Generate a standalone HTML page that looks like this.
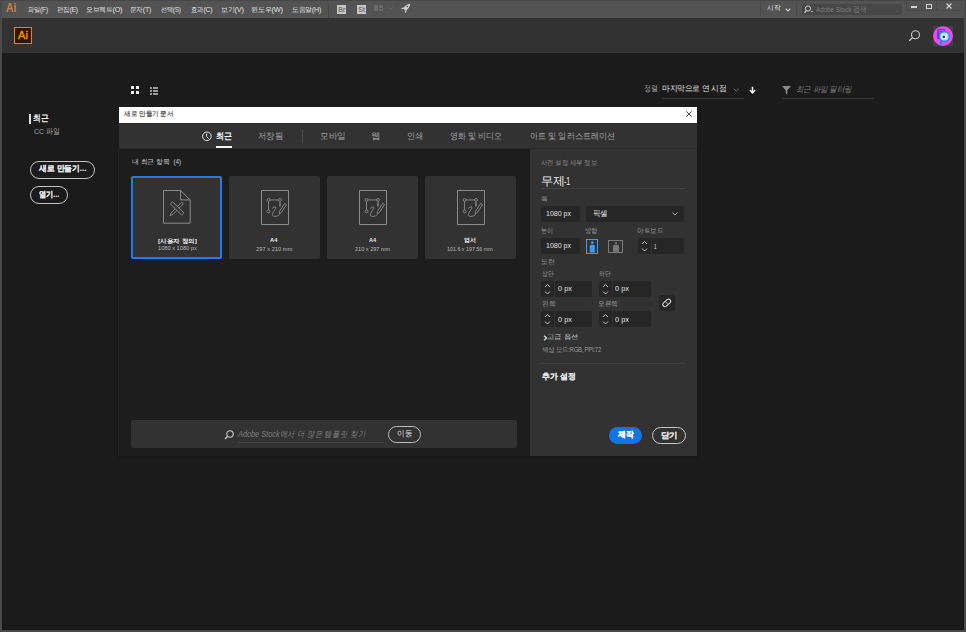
<!DOCTYPE html>
<html><head><meta charset="utf-8">
<style>
*{margin:0;padding:0;box-sizing:border-box}
html,body{width:966px;height:632px;overflow:hidden;background:#1b1b1b;font-family:"Liberation Sans",sans-serif;color:#ddd}
div,span{position:absolute;white-space:nowrap;transform-origin:0 0}
svg{position:absolute;overflow:visible}
#frame{left:0;top:0;width:966px;height:632px;border:2px solid #4a4a4a;border-top:0}
#menubar{left:0;top:0;width:966px;height:18px;background:#535353}
#header{left:0;top:18px;width:966px;height:35px;background:#323232}
.mi{top:3px;font-size:7.4px;color:#e4e4e4;line-height:12px;letter-spacing:-0.2px}
.tab{top:128px;font-size:8.7px;line-height:14px;color:#a0a0a0}
.card{top:176px;width:91px;height:83px;background:#323232;border-radius:2px}
.ct{font-size:6px;line-height:8px;color:#ececec;font-weight:bold}
.cs{font-size:5.5px;line-height:8px;color:#bababa}
.lbl{font-size:7px;line-height:9px;color:#9a9a9a}
.inp{background:#262626;border-radius:2px}
.val{font-size:8px;line-height:10px;color:#e0e0e0}
</style></head><body>
<div id="menubar">
  <div style="left:0;top:0;width:966px;height:1px;background:#474747"></div>
  <div id="t1" style="font-weight:bold;left:6.42px;top:1.20px;font-size:12px;line-height:14px;color:#c8834f;transform:scaleX(0.865)">Ai</div>
  <div id="t2" class="mi" style="left:27.60px;top:3.50px;transform:scaleX(0.887)">파일(F)</div>
  <div id="t3" class="mi" style="left:57.00px;top:3.50px;transform:scaleX(0.913)">편집(E)</div>
  <div id="t4" class="mi" style="left:86.03px;top:3.50px;transform:scaleX(0.973)">오브젝트(O)</div>
  <div id="t5" class="mi" style="left:130.24px;top:3.50px;transform:scaleX(0.946)">문자(T)</div>
  <div id="t6" class="mi" style="left:161.21px;top:3.50px;transform:scaleX(0.862)">선택(S)</div>
  <div id="t7" class="mi" style="left:191.00px;top:3.50px;transform:scaleX(0.917)">효과(C)</div>
  <div id="t8" class="mi" style="left:221.00px;top:3.50px">보기(V)</div>
  <div id="t9" class="mi" style="left:251.20px;top:3.50px">윈도우(W)</div>
  <div id="t10" class="mi" style="left:291.82px;top:3.50px;transform:scaleX(0.967)">도움말(H)</div>
  <div style="left:328px;top:4px;width:1px;height:14px;background:#474747"></div>
  <div style="left:337px;top:5px;width:9px;height:9px;background:#c6c6c6"></div><div id="t11" style="left:338.3px;top:5.5px;font-size:7px;line-height:8px;color:#505050">Br</div>
  <div style="left:357px;top:5px;width:9px;height:9px;background:#c6c6c6"></div><div id="t12" style="left:358.3px;top:5.5px;font-size:7px;line-height:8px;color:#505050">St</div>
  <div style="left:374px;top:5px;width:3.5px;height:6px;background:#6a6a6a"></div>
  <div style="left:378.7px;top:5px;width:4.3px;height:3px;background:#6a6a6a"></div>
  <div style="left:378.7px;top:8.8px;width:4.3px;height:2.3px;background:#6a6a6a"></div>
  <svg style="left:387.5px;top:7px" width="5" height="3"><path d="M0.4 0.4L2.5 2.4L4.6 0.4" stroke="#707070" fill="none" stroke-width="0.9"/></svg>
  <svg style="left:400px;top:3px" width="11" height="11" viewBox="400 3 11 11"><path d="M410.2 3.7C407.3 4 404.8 6 403.2 8.6L405.4 10.8C408 9.4 410 7 410.2 3.7Z" fill="#cfcfcf"/><path d="M403.9 7.3L401 8.3L402.7 9.6Z M406.7 10.1L405.9 13.2L404.5 11.6Z" fill="#cfcfcf"/><circle cx="407.3" cy="6.6" r="0.8" fill="#535353"/></svg>
  <div style="left:760px;top:2px;width:1px;height:14px;background:#4a4a4a"></div>
  <div id="t13" class="mi" style="left:766.60px;top:2.20px;transform:scaleX(0.958)">시작</div>
  <svg style="left:785px;top:8px" width="6" height="4"><path d="M0.7 0.7L3 3L5.3 0.7" stroke="#d0d0d0" stroke-width="1.1" fill="none"/></svg>
  <div style="left:796px;top:2px;width:1px;height:14px;background:#4a4a4a"></div>
  <div style="left:802px;top:4px;width:100px;height:11px;background:#474747;border-radius:2px"></div>
  <svg style="left:804px;top:5px" width="10" height="9" viewBox="0 0 10 9"><circle cx="4" cy="3.5" r="2.6" stroke="#cfcfcf" stroke-width="1" fill="none"/><path d="M2.3 5.4L0.6 7.8" stroke="#cfcfcf" stroke-width="1.2"/><path d="M6.8 6L9.2 6L8 7.4Z" fill="#cfcfcf"/></svg>
  <div id="t14" style="left:816.00px;top:3.50px;font-size:7.5px;line-height:12px;color:#7c7c7c;transform:scaleX(0.833)">Adobe Stock 검색</div>
  <div style="left:906px;top:0;width:56px;height:11px;border:1px solid #4b4b4b;border-top:0;border-radius:0 0 2px 2px"></div>
  <div style="left:921px;top:0;width:1px;height:10px;background:#4b4b4b"></div>
  <div style="left:936px;top:0;width:1px;height:10px;background:#4b4b4b"></div>
  <div style="left:911px;top:6px;width:6px;height:2px;background:#d0d0d0"></div>
  <div style="left:926px;top:4px;width:6px;height:4.5px;border:1px solid #d0d0d0;border-top-width:1.5px"></div>
  <svg style="left:946px;top:3px" width="6" height="6"><path d="M0.5 0.5L5.5 5.5M5.5 0.5L0.5 5.5" stroke="#d8d8d8" stroke-width="1.1"/></svg>
</div>
<div id="header">
  <div id="t15" style="left:14px;top:9px;width:18px;height:17px;border:1px solid #ff7c00;background:#2e1500;color:#ff9a00;font-size:11px;line-height:15px;text-align:center;font-weight:normal;-webkit-text-stroke:0.3px #ff9a00">Ai</div>
  <svg style="left:908px;top:12px" width="14" height="12" viewBox="0 0 14 12"><circle cx="7.5" cy="4.7" r="4" stroke="#cdcdcd" stroke-width="1.1" fill="none"/><path d="M4.6 7.6L1.3 10.8" stroke="#cdcdcd" stroke-width="1.3"/></svg>
  <svg style="left:933px;top:8px" width="20" height="20" viewBox="0 0 20 20"><rect width="20" height="20" fill="#414141"/><circle cx="10" cy="10.1" r="9.9" fill="#f544f2"/><rect x="4.2" y="2.9" width="8" height="10.3" rx="1" fill="#6a31d6"/><rect x="5.4" y="4.3" width="5.5" height="0.9" fill="#d070f0"/><rect x="5.4" y="6.3" width="2.5" height="0.9" fill="#b060e8"/><path d="M8.4 15.1L7.3 19.6" stroke="#1f8ff0" stroke-width="2.2"/><circle cx="11.4" cy="10.5" r="4.9" fill="#bfe8ff" stroke="#1f8ff0" stroke-width="1.6"/><circle cx="10.8" cy="10.9" r="2.2" fill="#fff"/><circle cx="10.8" cy="10.9" r="1.3" fill="#4a1fb0"/></svg>
</div>

<!-- sidebar -->
<div style="left:29.3px;top:114px;width:1.7px;height:10px;background:#dedede"></div>
<div id="t16" style="left:33.41px;top:111.30px;font-size:9px;line-height:14px;color:#f0f0f0;font-weight:bold;transform:scaleX(0.856)">최근</div>
<div id="t17" style="left:34.00px;top:126.30px;font-size:8px;line-height:12px;color:#a8a8a8;transform:scaleX(0.864)">CC 파일</div>
<div style="left:30px;top:161px;width:65px;height:17.5px;border:1.7px solid #c4c4c4;border-radius:9px"></div>
<div id="t18" style="left:38.60px;top:162.10px;font-size:8px;line-height:13px;color:#e4e4e4;font-weight:bold;-webkit-text-stroke:0.15px currentColor;transform:scaleX(0.967)">새로 만들기...</div>
<div style="left:30px;top:186px;width:38px;height:17.5px;border:1.7px solid #c4c4c4;border-radius:9px"></div>
<div id="t19" style="left:39.00px;top:187.70px;font-size:8px;line-height:13px;color:#e4e4e4;font-weight:bold;-webkit-text-stroke:0.15px currentColor;transform:scaleX(0.895)">열기...</div>

<!-- view toggles -->
<div style="left:131px;top:86px;width:3px;height:3px;background:#f0f0f0"></div>
<div style="left:136px;top:86px;width:3px;height:3px;background:#f0f0f0"></div>
<div style="left:131px;top:91px;width:3px;height:3px;background:#f0f0f0"></div>
<div style="left:136px;top:91px;width:3px;height:3px;background:#f0f0f0"></div>
<div style="left:150px;top:87px;width:2px;height:1.5px;background:#9a9a9a;box-shadow:0 3px 0 #9a9a9a,0 6px 0 #9a9a9a"></div>
<div style="left:153px;top:87px;width:5px;height:1.5px;background:#9a9a9a;box-shadow:0 3px 0 #9a9a9a,0 6px 0 #9a9a9a"></div>

<!-- sort / filter -->
<div id="t20" style="left:643.78px;top:83.20px;font-size:8px;line-height:12px;color:#9a9a9a;transform:scaleX(0.884)">정렬</div>
<div id="t21" style="left:662.00px;top:83.20px;font-size:8px;line-height:12px;color:#e8e8e8;letter-spacing:-0.2px;transform:scaleX(0.970)">마지막으로 연 시점</div>
<svg style="left:733px;top:87.5px" width="7" height="4"><path d="M0.7 0.7L3.3 3.2L5.9 0.7" stroke="#7a7a7a" stroke-width="0.9" fill="none"/></svg>
<div style="left:662px;top:98px;width:82px;height:1px;background:#3a3a3a"></div>
<svg style="left:749px;top:86px" width="7" height="8" viewBox="0 0 7 8"><path d="M3.5 0.8V6.8" stroke="#f0f0f0" stroke-width="1.6"/><path d="M0.9 4L3.5 6.8L6.1 4" stroke="#f0f0f0" stroke-width="1.6" fill="none"/></svg>
<svg style="left:782px;top:86px" width="9" height="9" viewBox="0 0 9 9"><path d="M0 0H9L5.3 4.3V8.5L3.7 7.5V4.3Z" fill="#8a8a8a"/></svg>
<div id="t22" style="left:796.00px;top:84.30px;font-size:8px;line-height:12px;color:#7a7a7a;font-style:italic;letter-spacing:-0.2px;transform:scaleX(0.943)">최근 파일 필터링</div>
<div style="left:782px;top:98px;width:92px;height:1px;background:#3a3a3a"></div>

<!-- dialog -->
<div style="left:119px;top:107px;width:578px;height:16px;background:#ffffff"></div>
<div id="t23" style="left:123.60px;top:108.40px;font-size:7px;line-height:11px;color:#1e1e1e;-webkit-text-stroke:0.1px #1e1e1e;transform:scaleX(0.938)">새로 만들기 문서</div>
<svg style="left:686px;top:111px" width="6" height="6"><path d="M0.3 0.3L5.7 5.7M5.7 0.3L0.3 5.7" stroke="#333" stroke-width="0.9"/></svg>
<div style="left:119px;top:123px;width:578px;height:26px;background:#323232"></div>
<div style="left:119px;top:148px;width:578px;height:1px;background:#2a2a2a"></div>
<div style="left:117px;top:149px;width:582px;height:309px;background:#181818"></div>
<div style="left:118px;top:149px;width:1px;height:307px;background:#222"></div>
<div style="left:119px;top:149px;width:411px;height:307px;background:#1d1d1d"></div>
<div style="left:530px;top:149px;width:167px;height:307px;background:#323232"></div>

<svg style="left:201px;top:131px" width="11" height="11" viewBox="0 0 11 11"><circle cx="5.9" cy="5.3" r="4.3" stroke="#e8e8e8" stroke-width="1" fill="none"/><path d="M5.6 2.6V5.6L7.6 7.6" stroke="#e8e8e8" stroke-width="1" fill="none"/></svg>
<div id="t24" class="tab" style="left:216.40px;color:#f4f4f4;font-weight:bold;top:128.50px;transform:scaleX(0.895)">최근</div>
<div style="left:216px;top:146px;width:16px;height:2px;background:#f4f4f4"></div>
<div id="t25" class="tab" style="left:258.26px;top:128.50px;transform:scaleX(0.932)">저장됨</div>
<div style="left:302px;top:130px;width:1px;height:13px;background:#4e4e4e"></div>
<div id="t26" class="tab" style="left:319.64px;top:128.50px;transform:scaleX(0.960)">모바일</div>
<div id="t27" class="tab" style="left:371.19px;top:128.50px;transform:scaleX(1.051)">웹</div>
<div id="t28" class="tab" style="left:407.19px;top:128.50px;transform:scaleX(0.918)">인쇄</div>
<div id="t29" class="tab" style="left:450.40px;top:128.50px;transform:scaleX(0.889)">영화 및 비디오</div>
<div id="t30" class="tab" style="left:529.80px;top:128.50px;transform:scaleX(0.895)">아트 및 일러스트레이션</div>

<div id="t31" style="left:131.60px;top:156.00px;font-size:6.5px;line-height:11px;color:#c8c8c8;transform:scaleX(0.980)">내 최근 항목 &nbsp;(4)</div>

<div class="card" style="left:131px;border:2px solid #1a7ef0"></div>
<div class="card" style="left:229px"></div>
<div class="card" style="left:327px"></div>
<div class="card" style="left:425px"></div>
<svg style="left:160px;top:186px" width="34" height="42" viewBox="0 0 34 42"><path d="M3.5 4.5H20.6L30.2 13.9V37.2H3.5Z M20.6 4.5V13.9H30.2" stroke="#8c8c8c" fill="none"/><path d="M21.6 16.2L23.4 17.8L13.1 28.3L10 29.9L11.3 26.7Z" stroke="#8c8c8c" fill="none" stroke-width="0.9" stroke-linejoin="round"/><path d="M12.6 15.7L23.9 27L21.7 29.2L10.4 17.9Z" stroke="#8c8c8c" fill="#323232" stroke-width="0.9"/><path d="M14 18.5L15 17.5M16 20.5L17 19.5M18 22.5L19 21.5M20 24.5L21 23.5" stroke="#6a6a6a" stroke-width="0.7"/></svg>
<svg style="left:261px;top:190px" width="29" height="36" viewBox="0 0 29 36"><path d="M0.5 0.5H27.5V34.5H0.5Z" stroke="#8c8c8c" fill="none" stroke-linejoin="round"/><path d="M7.55 9.95H19M7.55 9.95V21.4" stroke="#8c8c8c" stroke-width="0.9"/><path d="M19 12.2V16.5" stroke="#8c8c8c" stroke-width="1.4"/><circle cx="7.55" cy="9.95" r="1.45" fill="#323232" stroke="#8c8c8c" stroke-width="0.9"/><circle cx="19" cy="9.95" r="1.45" fill="#323232" stroke="#8c8c8c" stroke-width="0.9"/><circle cx="7.55" cy="21.4" r="1.45" fill="#323232" stroke="#8c8c8c" stroke-width="0.9"/><path d="M11.1 18.5C12.5 17.2 14.2 16.4 14.9 17.2C15.5 18.2 11.5 22.5 11.3 24.5C11.2 26.2 13.5 26.8 15.2 26.3C16.3 26 17.4 25.4 18 24.9" stroke="#8c8c8c" fill="none" stroke-width="0.9"/><path d="M23.7 13.3L25.5 14.5L20.2 22.7L18.3 24.2L18.4 21.5Z" stroke="#8c8c8c" fill="none" stroke-width="0.9" stroke-linejoin="round"/></svg>
<svg style="left:359px;top:190px" width="29" height="36" viewBox="0 0 29 36"><path d="M0.5 0.5H27.5V34.5H0.5Z" stroke="#8c8c8c" fill="none" stroke-linejoin="round"/><path d="M7.55 9.95H19M7.55 9.95V21.4" stroke="#8c8c8c" stroke-width="0.9"/><path d="M19 12.2V16.5" stroke="#8c8c8c" stroke-width="1.4"/><circle cx="7.55" cy="9.95" r="1.45" fill="#323232" stroke="#8c8c8c" stroke-width="0.9"/><circle cx="19" cy="9.95" r="1.45" fill="#323232" stroke="#8c8c8c" stroke-width="0.9"/><circle cx="7.55" cy="21.4" r="1.45" fill="#323232" stroke="#8c8c8c" stroke-width="0.9"/><path d="M11.1 18.5C12.5 17.2 14.2 16.4 14.9 17.2C15.5 18.2 11.5 22.5 11.3 24.5C11.2 26.2 13.5 26.8 15.2 26.3C16.3 26 17.4 25.4 18 24.9" stroke="#8c8c8c" fill="none" stroke-width="0.9"/><path d="M23.7 13.3L25.5 14.5L20.2 22.7L18.3 24.2L18.4 21.5Z" stroke="#8c8c8c" fill="none" stroke-width="0.9" stroke-linejoin="round"/></svg>
<svg style="left:457px;top:190px" width="29" height="36" viewBox="0 0 29 36"><path d="M0.5 0.5H27.5V34.5H0.5Z" stroke="#8c8c8c" fill="none" stroke-linejoin="round"/><path d="M7.55 9.95H19M7.55 9.95V21.4" stroke="#8c8c8c" stroke-width="0.9"/><path d="M19 12.2V16.5" stroke="#8c8c8c" stroke-width="1.4"/><circle cx="7.55" cy="9.95" r="1.45" fill="#323232" stroke="#8c8c8c" stroke-width="0.9"/><circle cx="19" cy="9.95" r="1.45" fill="#323232" stroke="#8c8c8c" stroke-width="0.9"/><circle cx="7.55" cy="21.4" r="1.45" fill="#323232" stroke="#8c8c8c" stroke-width="0.9"/><path d="M11.1 18.5C12.5 17.2 14.2 16.4 14.9 17.2C15.5 18.2 11.5 22.5 11.3 24.5C11.2 26.2 13.5 26.8 15.2 26.3C16.3 26 17.4 25.4 18 24.9" stroke="#8c8c8c" fill="none" stroke-width="0.9"/><path d="M23.7 13.3L25.5 14.5L20.2 22.7L18.3 24.2L18.4 21.5Z" stroke="#8c8c8c" fill="none" stroke-width="0.9" stroke-linejoin="round"/></svg>
<div id="c1" class="ct" style="left:157.80px;top:236.50px;transform:scaleX(1.089)">[사용자 정의]</div>
<div id="c2" class="cs" style="left:157.81px;top:244.40px;transform:scaleX(1.032)">1080 x 1080 px</div>
<div id="c3" class="ct" style="left:270.39px;top:236.30px;transform:scaleX(0.952)">A4</div>
<div id="c4" class="cs" style="left:256.00px;top:245.00px;transform:scaleX(1.046)">297 x 210 mm</div>
<div id="c5" class="ct" style="left:368.59px;top:236.30px;transform:scaleX(0.926)">A4</div>
<div id="c6" class="cs" style="left:354.60px;top:245.00px;transform:scaleX(1.011)">210 x 297 mm</div>
<div id="c7" class="ct" style="left:464.00px;top:235.50px">엽서</div>
<div id="c8" class="cs" style="left:447.00px;top:245.00px;transform:scaleX(0.970)">101.6 x 197.56 mm</div>

<!-- stock bar -->
<div style="left:131px;top:420px;width:386px;height:28px;background:#323232;border-radius:2px"></div>
<svg style="left:224px;top:430px" width="10" height="10" viewBox="0 0 10 10"><circle cx="6" cy="4" r="3.2" stroke="#c8c8c8" stroke-width="1.1" fill="none"/><path d="M3.7 6.3L1 9" stroke="#c8c8c8" stroke-width="1.3"/></svg>
<div id="t32" style="left:238.46px;top:428.00px;font-size:8.5px;line-height:12px;color:#7e7e7e;font-style:italic;transform:scaleX(0.862)">Adobe Stock에서 더 많은 템플릿 찾기</div>
<div style="left:238px;top:442px;width:146px;height:1px;background:#444"></div>
<div style="left:388px;top:426px;width:33px;height:17px;border:1.3px solid #bdbdbd;border-radius:9px"></div>
<div id="t33" style="left:397.00px;top:428.30px;font-size:7.5px;line-height:12px;color:#e0e0e0;transform:scaleX(0.938)">이동</div>

<!-- right panel -->
<div id="t34" class="lbl" style="left:541.40px;top:157.70px;font-size:6.5px;color:#8c8c8c;transform:scaleX(0.910)">사전 설정 세부 정보</div>
<div id="t35" style="left:540.62px;top:172.90px;font-size:11.5px;line-height:17px;color:#f0f0f0">무제</div>
<div id="t35b" style="left:564.00px;top:174.40px;font-size:10.5px;line-height:14px;color:#f0f0f0;transform:scaleX(0.667)">-1</div>
<div style="left:541px;top:188px;width:144px;height:1px;background:#444"></div>
<div id="t36" class="lbl" style="left:541.17px;top:193.60px;transform:scaleX(0.975)">폭</div>
<div class="inp" style="left:541px;top:206px;width:39px;height:16px"></div>
<div id="t37" class="val" style="left:545.60px;top:208.50px;transform:scaleX(0.876)">1080 px</div>
<div class="inp" style="left:586px;top:206px;width:98px;height:16px"></div>
<div id="t38" class="val" style="left:593.00px;top:209.20px;transform:scaleX(0.933)">픽셀</div>
<svg style="left:672px;top:212px" width="6" height="4"><path d="M0.5 0.5L3 3L5.5 0.5" stroke="#a8a8a8" fill="none"/></svg>
<div id="t39" class="lbl" style="left:541.21px;top:226.10px;transform:scaleX(0.862)">높이</div>
<div id="t40" class="lbl" style="left:585.03px;top:226.10px;transform:scaleX(0.889)">방향</div>
<div id="t41" class="lbl" style="left:637.20px;top:226.10px;transform:scaleX(0.941)">아트보드</div>
<div class="inp" style="left:541px;top:238px;width:39px;height:16px"></div>
<div id="t42" class="val" style="left:545.60px;top:241.20px;transform:scaleX(0.876)">1080 px</div>
<div style="left:586px;top:239px;width:12px;height:15px;border:1.3px solid #3c9cf5"></div>
<svg style="left:586px;top:239px" width="12" height="15" viewBox="0 0 12 15"><circle cx="6.3" cy="3.6" r="1.3" fill="#3c9cf5"/><path d="M3.8 13.5V7.6C3.8 6.4 4.6 5.8 5.6 5.8H7C8 5.8 8.8 6.4 8.8 7.6V13.5Z" fill="#3c9cf5"/></svg>
<div style="left:608px;top:240px;width:15px;height:13px;border:1.3px solid #7a7a7a"></div>
<svg style="left:608px;top:240px" width="15" height="13" viewBox="0 0 15 13"><circle cx="8" cy="3.3" r="1.1" fill="#7a7a7a"/><path d="M5 11.8V6.6C5 5.6 5.6 5 6.5 5H9.5C10.4 5 11 5.6 11 6.6V11.8Z" fill="#7a7a7a"/></svg>
<div class="inp" style="left:638px;top:238px;width:46px;height:16px"></div>
<div style="left:651px;top:238px;width:1px;height:16px;background:#323232"></div>
<svg style="left:641px;top:240px" width="7" height="12" viewBox="0 0 7 12"><path d="M1 4L3.5 1.5L6 4M1 8.5L3.5 11L6 8.5" stroke="#d0d0d0" stroke-width="0.9" fill="none"/></svg>
<div id="t43" class="val" style="left:654.37px;top:242.40px;transform:scaleX(0.563)">1</div>

<div id="t44" class="lbl" style="left:540.62px;top:257.40px">도련</div>
<div id="t45" class="lbl" style="left:541.59px;top:269.00px;transform:scaleX(0.815)">상단</div>
<div id="t46" class="lbl" style="left:599.40px;top:269.00px;transform:scaleX(0.829)">하단</div>
<div class="inp" style="left:541px;top:281px;width:51px;height:16px"></div>
<div style="left:554px;top:281px;width:1px;height:16px;background:#323232"></div>
<svg style="left:544px;top:283px" width="7" height="12" viewBox="0 0 7 12"><path d="M1 4L3.5 1.5L6 4M1 8.5L3.5 11L6 8.5" stroke="#d0d0d0" stroke-width="0.9" fill="none"/></svg>
<div id="t47" class="val" style="left:557.78px;top:284.00px;transform:scaleX(0.922)">0 px</div>
<div class="inp" style="left:599px;top:281px;width:52px;height:16px"></div>
<div style="left:612px;top:281px;width:1px;height:16px;background:#323232"></div>
<svg style="left:602px;top:283px" width="7" height="12" viewBox="0 0 7 12"><path d="M1 4L3.5 1.5L6 4M1 8.5L3.5 11L6 8.5" stroke="#d0d0d0" stroke-width="0.9" fill="none"/></svg>
<div id="t48" class="val" style="left:615.22px;top:284.00px;transform:scaleX(0.922)">0 px</div>
<div class="inp" style="left:659px;top:295px;width:16px;height:16px"></div>
<svg style="left:660px;top:296px" width="14" height="14" viewBox="0 0 14 14"><g transform="rotate(-42 6.7 6.9)"><rect x="2.2" y="4.8" width="9" height="4.2" rx="2.1" stroke="#e0e0e0" stroke-width="1" fill="none"/><path d="M6.7 5V8.8" stroke="#c8c8c8" stroke-width="0.8"/></g></svg>
<div id="t49" class="lbl" style="left:541.59px;top:299.40px;transform:scaleX(0.954)">왼쪽</div>
<div id="t50" class="lbl" style="left:598.44px;top:299.40px;transform:scaleX(0.958)">오른쪽</div>
<div class="inp" style="left:541px;top:311px;width:51px;height:16px"></div>
<div style="left:554px;top:311px;width:1px;height:16px;background:#323232"></div>
<svg style="left:544px;top:313px" width="7" height="12" viewBox="0 0 7 12"><path d="M1 4L3.5 1.5L6 4M1 8.5L3.5 11L6 8.5" stroke="#d0d0d0" stroke-width="0.9" fill="none"/></svg>
<div id="t51" class="val" style="left:557.78px;top:314.50px;transform:scaleX(0.922)">0 px</div>
<div class="inp" style="left:599px;top:311px;width:52px;height:16px"></div>
<div style="left:612px;top:311px;width:1px;height:16px;background:#323232"></div>
<svg style="left:602px;top:313px" width="7" height="12" viewBox="0 0 7 12"><path d="M1 4L3.5 1.5L6 4M1 8.5L3.5 11L6 8.5" stroke="#d0d0d0" stroke-width="0.9" fill="none"/></svg>
<div id="t52" class="val" style="left:615.22px;top:314.50px;transform:scaleX(0.922)">0 px</div>

<svg style="left:543px;top:335px" width="5" height="6"><path d="M1 0.7L3.7 3L1 5.3" stroke="#e0e0e0" stroke-width="1.2" fill="none"/></svg>
<div id="t53" class="lbl" style="left:546.89px;top:332.00px;color:#c0c0c0;transform:scaleX(1.052)">고급 옵션</div>
<div id="t54" class="lbl" style="left:541.60px;top:345.46px;font-size:6.5px;color:#9a9a9a;letter-spacing:-0.3px;transform:scaleX(0.925)">색상 모드:RGB, PPI:72</div>
<div style="left:541px;top:363px;width:144px;height:1px;background:#404040"></div>
<div id="t55" style="left:542.00px;top:370.80px;font-size:8px;line-height:12px;color:#e4e4e4;font-weight:bold;-webkit-text-stroke:0.15px currentColor;transform:scaleX(0.977)">추가 설정</div>

<div style="left:609px;top:427px;width:33px;height:17px;background:#1473e6;border-radius:9px"></div>
<div id="t56" style="left:617.80px;top:428.20px;font-size:8px;line-height:13px;color:#fff;font-weight:bold;-webkit-text-stroke:0.15px currentColor;transform:scaleX(0.976)">제작</div>
<div style="left:652px;top:427px;width:34px;height:17px;border:1.3px solid #c8c8c8;border-radius:9px"></div>
<div id="t57" style="left:661.00px;top:429.20px;font-size:8px;line-height:13px;color:#e0e0e0;font-weight:bold;-webkit-text-stroke:0.15px currentColor;transform:scaleX(1.053)">닫기</div>

<div style="left:2px;top:53px;width:962px;height:577px;border:1px solid #171717;border-top:0"></div>
<div id="frame"></div>
</body></html>
